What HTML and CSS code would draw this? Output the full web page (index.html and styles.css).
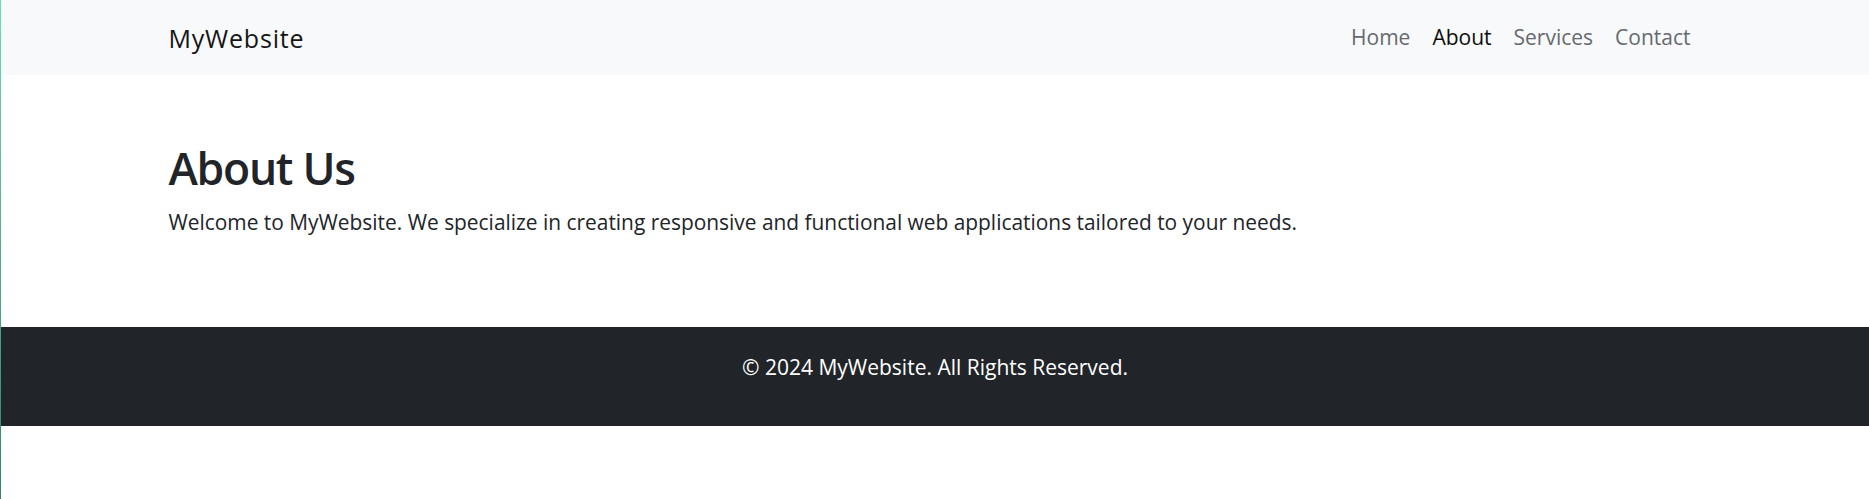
FILE: index.html
```html
<!DOCTYPE html>
<html lang="en">
<head>
<meta charset="utf-8">
<title>About - MyWebsite</title>
<link rel="stylesheet" href="styles.css">
</head>
<body>
  <nav class="navbar">
    <div class="container navbar-inner">
      <a class="brand" href="#">MyWebsite</a>
      <ul class="nav">
        <li><a class="nav-link" href="#">Home</a></li>
        <li><a class="nav-link active" href="#">About</a></li>
        <li><a class="nav-link" href="#">Services</a></li>
        <li><a class="nav-link" href="#">Contact</a></li>
      </ul>
    </div>
  </nav>
  <main class="main">
    <div class="container">
      <h1 class="title">About Us</h1>
      <p class="lead-text">Welcome to MyWebsite. We specialize in creating responsive and functional web applications tailored to your needs.</p>
    </div>
  </main>
  <footer class="footer">
    <p class="footer-text">&copy; 2024 MyWebsite. All Rights Reserved.</p>
  </footer>
</body>
</html>
```

FILE: styles.css
```css
* { box-sizing: border-box; }

html, body { margin: 0; padding: 0; }

body {
  font-family: "Open Sans", "Noto Sans", sans-serif;
  color: #212529;
  background: #fff;
  min-height: 100vh;
  border-left: 1px solid #4cb894;
  border-image: linear-gradient(to bottom, #62e2ba, #2f8565) 1;
}

.container {
  width: 1533px;
  margin: 0 auto;
}

.navbar {
  background: #f8f9fa;
  height: 75px;
}

.navbar-inner {
  height: 100%;
  display: flex;
  align-items: center;
  justify-content: space-between;
}

.brand {
  font-size: 25px;
  letter-spacing: 0.8px;
  color: #151515;
  text-decoration: none;
  line-height: 1.5;
  position: relative;
  top: 1px;
}

.nav {
  list-style: none;
  margin: 0;
  padding: 0;
  display: flex;
}

.nav-link {
  display: block;
  padding: 8px 11px;
  font-size: 21px;
  line-height: 1.5;
  color: #666a6e;
  text-decoration: none;
}

.nav-link.active { color: #0d0d0d; }

.main {
  padding-top: 65.5px;
  padding-bottom: 41.5px;
}

.title {
  margin: 0 0 13px;
  font-size: 44.5px;
  font-weight: 600;
  line-height: 1.2;
  letter-spacing: -1.3px;
}

.lead-text {
  margin: 0 0 47px;
  font-size: 20.9px;
  line-height: 1.5;
}

.footer {
  background: #212529;
  color: #fff;
  text-align: center;
  padding: 25px 0 22.5px;
}

.footer-text {
  margin: 0 0 20px;
  font-size: 21px;
  line-height: 1.5;
}
```
